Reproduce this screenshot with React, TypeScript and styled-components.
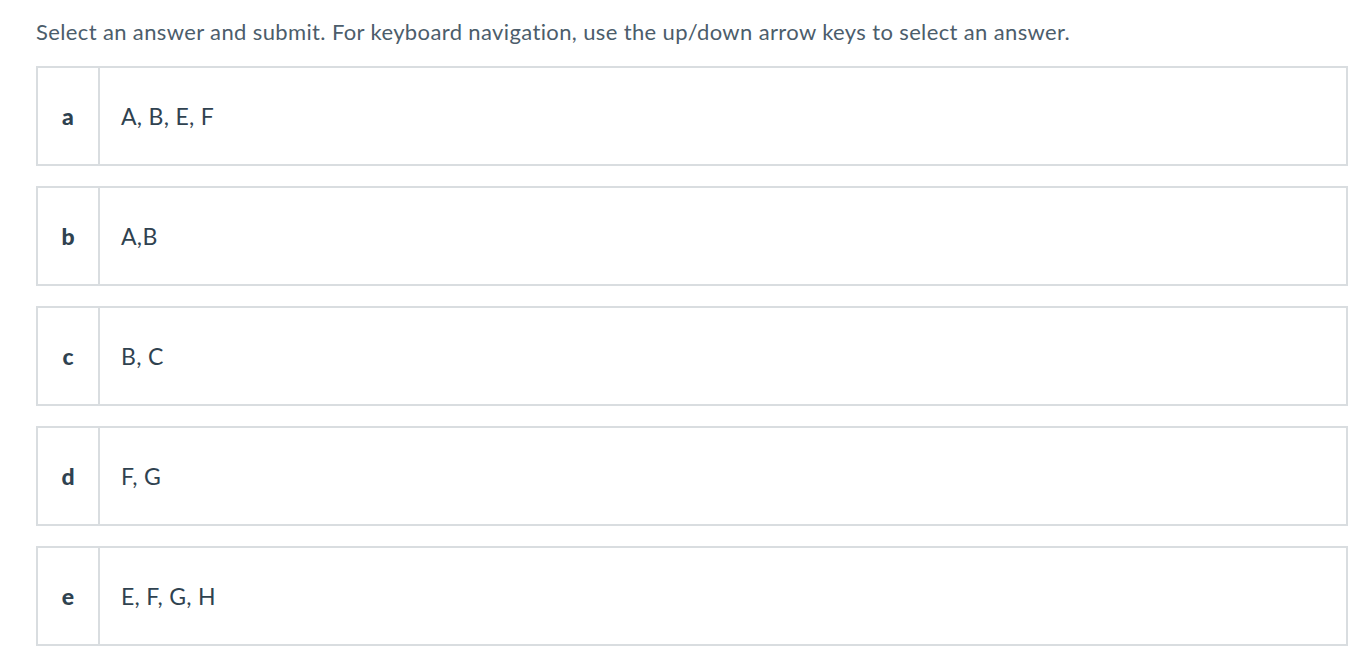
import React from 'react';
import styled, { createGlobalStyle } from 'styled-components';

const GlobalStyle = createGlobalStyle`
  body {
    margin: 0;
    background: #ffffff;
    font-family: Lato, "Liberation Sans", sans-serif;
  }
`;

const Page = styled.div`
  padding: 18px 22px 0 36px;
`;

const Prompt = styled.p`
  margin: 0 0 20px;
  font-size: 22px;
  line-height: 28px;
  letter-spacing: 0.37px;
  color: #4c5d6b;
`;

const Options = styled.div`
  display: flex;
  flex-direction: column;
  gap: 20px;
`;

const Option = styled.div`
  display: flex;
  height: 100px;
  box-sizing: border-box;
  border: 2px solid #d9dde0;
  background: #ffffff;
  cursor: pointer;
`;

const Letter = styled.div`
  width: 60px;
  flex-shrink: 0;
  display: flex;
  align-items: center;
  justify-content: center;
  border-right: 2px solid #d9dde0;
  font-size: 23px;
  font-weight: 900;
  color: #2f4250;
`;

const Answer = styled.div`
  display: flex;
  align-items: center;
  padding-left: 21px;
  font-size: 23px;
  letter-spacing: 0.3px;
  color: #2f4250;
`;

const answers = [
  { key: 'a', text: 'A, B, E, F' },
  { key: 'b', text: 'A,B' },
  { key: 'c', text: 'B, C' },
  { key: 'd', text: 'F, G' },
  { key: 'e', text: 'E, F, G, H' },
];

const App = () => (
  <>
    <GlobalStyle />
    <Page>
      <Prompt>
        Select an answer and submit. For keyboard navigation, use the up/down arrow keys to select an answer.
      </Prompt>
      <Options>
        {answers.map(item => (
          <Option key={item.key}>
            <Letter>{item.key}</Letter>
            <Answer>{item.text}</Answer>
          </Option>
        ))}
      </Options>
    </Page>
  </>
);

export default App;
